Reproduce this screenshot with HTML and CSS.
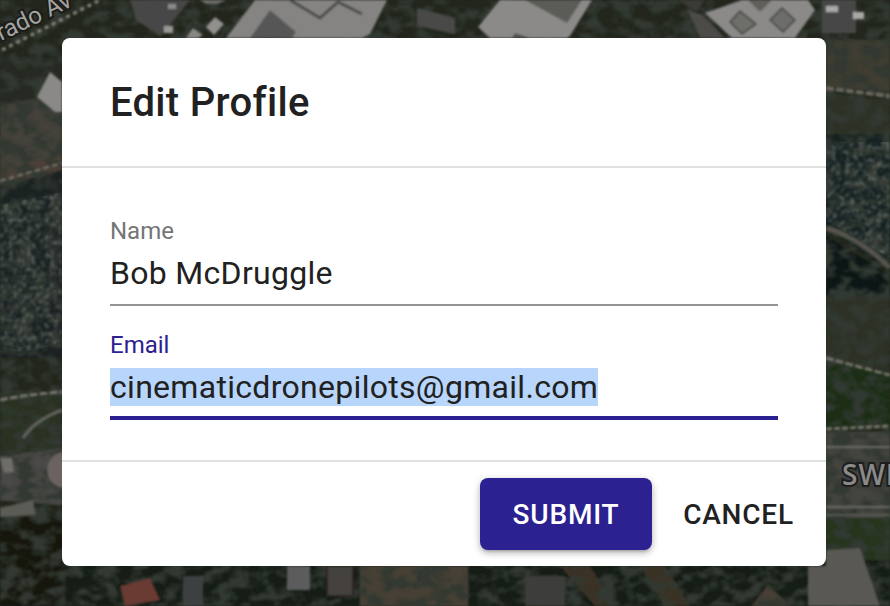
FILE: index.html
```html
<!DOCTYPE html>
<html lang="en">
  <head>
    <meta charset="UTF-8" />
    <title>Edit Profile</title>
    <link rel="stylesheet" href="styles.css">
  </head>
  <body>
    <svg class="map" width="890" height="606" viewBox="0 0 890 606" aria-hidden="true">
      <defs>
        <filter id="soft" x="0" y="0" width="100%" height="100%"><feGaussianBlur stdDeviation="0.8" /></filter>
        <filter id="leafy" x="0" y="0" width="100%" height="100%">
          <feTurbulence type="fractalNoise" baseFrequency="0.06 0.09" numOctaves="3" seed="4" />
          <feColorMatrix values="0 0 0 0 0.03  0 0 0 0 0.04  0 0 0 0 0.03  4.5 0 0 0 -1.85" />
          <feGaussianBlur stdDeviation="0.8" />
        </filter>
        <filter id="grain" x="0" y="0" width="100%" height="100%">
          <feTurbulence type="fractalNoise" baseFrequency="0.22" numOctaves="3" seed="9" />
          <feColorMatrix values="0 0 0 0 0.36  0 0 0 0 0.4  0 0 0 0 0.4  2.4 0 0 0 -1.1" />
          <feGaussianBlur stdDeviation="0.9" />
        </filter>
        <clipPath id="water-left"><path d="M0 205 L62 192 V340 Q30 358 0 348 Z" /></clipPath>
        <clipPath id="water-right"><path d="M826 142 H890 V258 L826 220 Z" /></clipPath>
      </defs>
      <g filter="url(#soft)">
        <rect width="890" height="606" fill="#22261f" />
        <rect y="540" width="890" height="66" fill="#171a13" />
        <!-- dry grass -->
        <path d="M0 105 L62 95 V165 L0 178 Z" fill="#45433a" />
        <path d="M0 60 L30 55 L62 60 V95 L0 105 Z" fill="#262c24" />
        <path d="M826 40 H890 V92 L826 86 Z" fill="#403d32" />
        <path d="M826 94 L890 100 V134 H826 Z" fill="#2f3327" />
        <!-- dirt track left -->
        <path d="M0 168 L62 156 V172 L0 186 Z" fill="#4e4039" />
        <!-- river -->
        <path d="M0 186 L62 170 V358 H0 Z" fill="#1a2121" />
        <path d="M826 134 H890 V270 L826 228 Z" fill="#162020" />
        <path d="M826 236 L890 275 V300 H826 Z" fill="#0f1614" />
        <!-- right side lawn and street -->
        <path d="M826 296 H890 V372 L826 358 Z" fill="#2e3025" />
        <path d="M826 358 L890 374 V428 H826 Z" fill="#1a2f18" />
        <rect x="826" y="432" width="64" height="86" fill="#44443f" />
        <rect x="826" y="518" width="64" height="42" fill="#27361f" />
        <!-- left side lawn and cul-de-sac -->
        <path d="M0 400 L62 394 V450 L0 455 Z" fill="#293324" />
        <path d="M0 456 L62 448 V505 L0 500 Z" fill="#4b4a47" />
        <path d="M0 510 L62 520 V606 H0 Z" fill="#141710" />
        <!-- tan ground along the bottom -->
        <rect x="360" y="566" width="108" height="40" fill="#463f34" />
        <path d="M560 566 L590 566 L615 606 H595 Z M640 566 H665 L690 606 H665 Z" fill="#3a3128" />
        <path d="M752 606 L768 585 L790 606 Z" fill="#4a4136" />
      </g>
      <rect width="890" height="606" filter="url(#leafy)" />
      <g class="water" clip-path="url(#water-left)"><rect x="0" y="190" width="62" height="170" filter="url(#grain)" /></g>
      <g class="water" clip-path="url(#water-right)"><rect x="826" y="140" width="64" height="120" filter="url(#grain)" /></g>
      <g filter="url(#soft)">
        <!-- top buildings -->
        <path d="M130 0 H190 L170 25 L160 36 L136 20 Z" fill="#474746" />
        <rect x="168" y="4" width="8" height="5" fill="#8c8a88" />
        <rect x="164" y="26" width="9" height="7" fill="#9a9896" />
        <path d="M200 0 H226 L218 4 H206 Z" fill="#6c6b66" />
        <path d="M215 17 L224 24 L214 35 L206 27 Z" fill="#91908d" />
        <path d="M193 28 L203 35 L198 38 H186 Z" fill="#888785" />
        <path d="M226 38 L255 0 H387 L370 34 L362 38 Z" fill="#858482" />
        <path d="M250 38 L270 10 L296 32 L292 38 Z" fill="#575756" />
        <path d="M290 0 L320 18 L338 2 L362 14" fill="none" stroke="#4a4a47" stroke-width="3" />
        <path d="M417 8 L455 18 V34 L417 26 Z" fill="#484947" />
        <path d="M478 27 L500 0 H592 L570 36 L567 38 H490 Z" fill="#8b8a88" />
        <path d="M525 0 H582 L567 23 Z" fill="#5c5b57" />
        <path d="M515 33 L530 38 H512 Z" fill="#55544f" />
        <path d="M678 0 H705 L696 12 Z" fill="#3a3a36" />
        <path d="M688 10 L702 15 L725 38 H700 Z" fill="#4e4c47" />
        <path d="M705 13 L742 0 H808 L815 10 L795 38 H732 Z" fill="#8b8a88" />
        <path d="M748 0 H772 L760 12 Z" fill="#605f5a" />
        <path d="M740 11 L756 24 L742 34 L730 22 Z M782 8 L795 20 L783 32 L770 20 Z" fill="#6d6d69" stroke="#3f3f3c" stroke-width="1.5" />
        <rect x="822" y="0" width="34" height="33" fill="#474747" />
        <rect x="826" y="6" width="12" height="6" fill="#a9a8a6" />
        <rect x="853" y="12" width="11" height="7" fill="#a9a8a6" />
        <!-- small shed left -->
        <path d="M37 97 L50 72 L62 82 V112 L55 112 Z" fill="#8a8987" />
        <!-- bottom houses -->
        <path d="M120 586 L150 578 L160 600 L125 606 Z" fill="#6b3a32" />
        <rect x="183" y="576" width="20" height="30" fill="#3e3f3f" />
        <rect x="287" y="566" width="23" height="24" fill="#5c5c5b" />
        <rect x="327" y="566" width="26" height="30" fill="#45423c" stroke="#2c241c" stroke-width="2" />
        <rect x="525" y="576" width="40" height="30" fill="#3c3d3a" />
        <rect x="808" y="566" width="45" height="40" fill="#5a5955" />
        <path d="M826 550 L860 548 L880 606 H826 Z" fill="#5a5955" />
        <!-- cul-de-sac and street markings -->
        <ellipse cx="66" cy="470" rx="19" ry="18" fill="#6a6460" />
        <path d="M0 458 H12 L14 472 L4 473 Z" fill="#6e6d68" />
        <path d="M0 508 L33 500 L36 515 L0 517 Z" fill="#5c5b56" />
        <rect x="826" y="446" width="64" height="2" fill="#6a6a64" />
        <rect x="826" y="506" width="64" height="2" fill="#6a6a64" />
        <rect x="826" y="514" width="64" height="2" fill="#5a5a54" />
        <!-- paths with dashes -->
        <path d="M0 181 L62 163" fill="none" stroke="#7d776c" stroke-width="2" stroke-dasharray="6 3" />
        <path d="M0 400 Q30 394 62 392" fill="none" stroke="#77776e" stroke-width="3" stroke-dasharray="8 2" />
        <path d="M62 410 Q35 420 23 438" fill="none" stroke="#63635b" stroke-width="3" />
        <path d="M826 88 L890 96" fill="none" stroke="#6a675d" stroke-width="4" stroke-dasharray="8 2" />
        <path d="M826 228 Q860 238 890 268" fill="none" stroke="#55534c" stroke-width="5" />
        <path d="M826 358 L890 375" fill="none" stroke="#77756b" stroke-width="3" stroke-dasharray="8 2" />
        <path d="M826 429 L890 426" fill="none" stroke="#77756b" stroke-width="3" stroke-dasharray="6 2" />
        <path d="M2 50 L100 0" fill="none" stroke="#8a8c80" stroke-width="3" stroke-dasharray="4 4" />
      </g>
      <text class="map-street" transform="translate(1 41) rotate(-26)">rado Av</text>
      <text class="map-city" x="842" y="485">SWI</text>
    </svg>

    <div class="dialog">
      <h2 class="dialog-title">Edit Profile</h2>
      <div class="dialog-content">
        <div class="field">
          <label class="field-label">Name</label>
          <div class="field-value">Bob McDruggle</div>
        </div>
        <div class="field field-focused">
          <label class="field-label">Email</label>
          <div class="field-value"><span class="selected">cinematicdronepilots@gmail.com</span></div>
        </div>
      </div>
      <div class="dialog-actions">
        <button class="btn btn-primary">Submit</button>
        <button class="btn btn-text">Cancel</button>
      </div>
    </div>
  </body>
</html>
```

FILE: styles.css
```css
html,
body {
  height: 100%;
}
body {
  margin: 0;
  padding: 38px 64px 40px 62px;
  box-sizing: border-box;
  overflow: hidden;
  background: #22261f;
  font-family: Roboto, "Liberation Sans", sans-serif;
  color: #212121;
}
.map {
  position: absolute;
  top: 0;
  left: 0;
}
.water {
  opacity: 0.5;
}
.map-street {
  font-size: 24px;
  fill: #a3a3a0;
  stroke: #1c1c1a;
  stroke-width: 4px;
  paint-order: stroke;
}
.map-city {
  font-family: "Open Sans", sans-serif;
  font-size: 28px;
  font-weight: 600;
  letter-spacing: 1px;
  fill: #8a8a88;
  stroke: #1d1d1d;
  stroke-width: 4px;
  paint-order: stroke;
}
.dialog {
  position: relative;
  display: flex;
  flex-direction: column;
  height: 528px;
  background: #fff;
  border-radius: 8px;
}
.dialog-title {
  margin: 0;
  padding: 41px 48px 39px;
  height: 48px;
  font-size: 40px;
  line-height: 48px;
  font-weight: 500;
  letter-spacing: 0.3px;
  border-bottom: 2px solid #e0e0e0;
}
.dialog-content {
  flex: 1;
  padding: 47px 48px 0;
  border-bottom: 2px solid #e0e0e0;
}
.field {
  margin-bottom: 23px;
  border-bottom: 2px solid #949494;
}
.field-focused {
  border-bottom: 4px solid #2c2190;
}
.field-label {
  display: block;
  height: 32px;
  font-size: 24px;
  line-height: 32px;
  color: #757575;
}
.field-focused .field-label {
  color: #2c2190;
}
.field-value {
  height: 57px;
  font-size: 32px;
  line-height: 52px;
  letter-spacing: 0.3px;
}
.field-focused .field-value {
  height: 55px;
}
.selected {
  background: #b8d5fb;
}
.dialog-actions {
  display: flex;
  justify-content: flex-end;
  gap: 16px;
  padding: 16px 17px 16px 16px;
}
.btn {
  height: 72px;
  padding: 0;
  border: 0;
  border-radius: 8px;
  background: transparent;
  color: #212121;
  font-family: inherit;
  font-size: 28px;
  font-weight: 500;
  letter-spacing: 0.8px;
  text-transform: uppercase;
}
.btn-text {
  width: 141px;
}
.btn-primary {
  width: 172px;
  background: #2c2190;
  color: #fff;
  box-shadow: 0 3px 3px -2px rgba(0, 0, 0, 0.2), 0 3px 6px 0 rgba(0, 0, 0, 0.2), 0 2px 10px 0 rgba(0, 0, 0, 0.12);
}
```
